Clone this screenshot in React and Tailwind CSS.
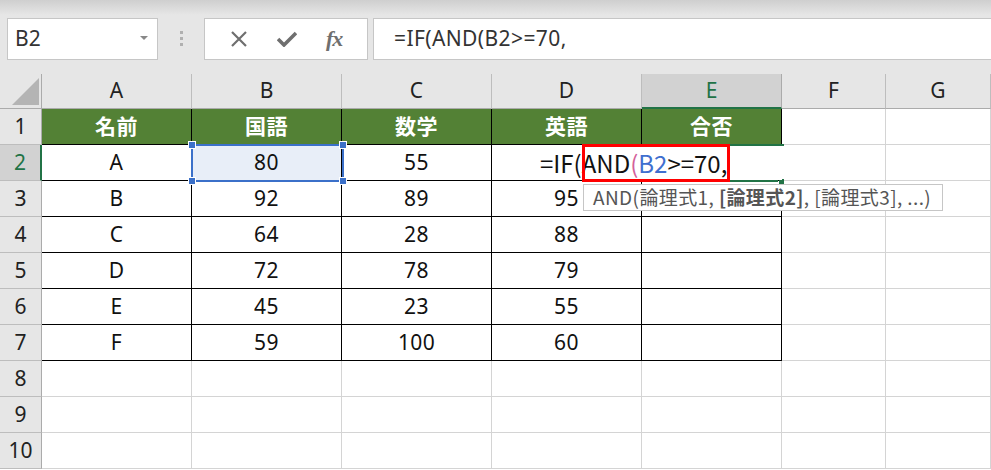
import React from "react";

const letters = ["A", "B", "C", "D", "E", "F", "G"];

const rows = [
  ["名前", "国語", "数学", "英語", "合否"],
  ["A", "80", "55", "", ""],
  ["B", "92", "89", "95", ""],
  ["C", "64", "28", "88", ""],
  ["D", "72", "78", "79", ""],
  ["E", "45", "23", "55", ""],
  ["F", "59", "100", "60", ""],
  [],
  [],
  [],
];

const FormulaBar = () => {
  return (
    <div className="h-[74px] bg-[#e6e6e6] relative">
      <div className="h-[15px] bg-gradient-to-b from-[#cfcfcf] to-[#e6e6e6]" />
      <div className="flex items-center h-[43px] mt-[2px]">
        <div className="ml-[7px] w-[151px] h-[42px] bg-white border border-[#c6c6c6] flex items-center justify-between pl-[7px] pr-[9px]">
          <span className="text-[21px] text-[#333]">B2</span>
          <svg width="8" height="5" viewBox="0 0 8 5">
            <path d="M0 0 L8 0 L4 4 Z" fill="#888" />
          </svg>
        </div>
        <div className="w-[46px] flex flex-col items-center gap-[3px]">
          <span className="w-[3px] h-[3px] bg-[#b0b0b0]" />
          <span className="w-[3px] h-[3px] bg-[#b0b0b0]" />
          <span className="w-[3px] h-[3px] bg-[#b0b0b0]" />
        </div>
        <div className="w-[164px] h-[42px] bg-white border border-[#c6c6c6] flex items-center justify-around px-[10px]">
          <svg width="18" height="18" viewBox="0 0 18 18">
            <path d="M2 2 L16 16 M16 2 L2 16" stroke="#6f6f6f" strokeWidth="2.2" />
          </svg>
          <svg width="20" height="16" viewBox="0 0 20 16">
            <path d="M1 8 L7 14 L19 2" stroke="#6f6f6f" strokeWidth="3.6" fill="none" />
          </svg>
          <span className="font-['Liberation_Serif',serif] italic font-bold text-[22px] text-[#6f6f6f] tracking-[-1px]">
            fx
          </span>
        </div>
        <div className="ml-[5px] flex-1 h-[42px] bg-white border-y border-l border-[#c6c6c6] flex items-center pl-[20px]">
          <span className="text-[21px] text-[#333] tracking-[0.4px]">=IF(AND(B2&gt;=70,</span>
        </div>
      </div>
    </div>
  );
};

const cellClass = (r, c) => {
  if (r === 0 && c <= 4) {
    return "bg-[#538135] text-white font-bold border-r border-b border-black";
  }
  if (r <= 6 && c <= 4) {
    if (r === 1 && c === 1) return "bg-[#e8eef8] border-r border-b border-black";
    return "bg-white border-r border-b border-black";
  }
  return "bg-white border-r border-b border-[#d4d4d4]";
};

const Sheet = () => {
  return (
    <div className="relative grid grid-cols-[42px_150px_150px_150px_150px_140px_104px_105px] grid-rows-[35px_repeat(10,36px)]">
      <div className="bg-[#e6e6e6] border-r border-b border-[#ababab] relative">
        <svg className="absolute left-[12px] top-[4px]" width="27" height="27" viewBox="0 0 27 27">
          <path d="M27 0 L27 27 L0 27 Z" fill="#b4b4b4" />
        </svg>
      </div>
      {letters.map((l) => (
        <div
          key={l}
          className={
            l === "E"
              ? "bg-[#d2d2d2] border-r border-[#ababab] border-b-2 border-b-[#217346] text-[#217346] flex items-center justify-center text-[21px]"
              : "bg-[#e6e6e6] border-r border-b border-[#bdbdbd] border-b-[#ababab] text-[#222] flex items-center justify-center text-[21px]"
          }
        >
          {l}
        </div>
      ))}
      {rows.map((row, r) => (
        <React.Fragment key={r}>
          <div
            className={
              r === 1
                ? "bg-[#d2d2d2] border-r-2 border-r-[#217346] border-b border-[#bdbdbd] text-[#217346] flex items-center justify-center text-[21px]"
                : "bg-[#e6e6e6] border-r border-b border-[#bdbdbd] border-r-[#ababab] text-[#222] flex items-center justify-center text-[21px]"
            }
          >
            {r + 1}
          </div>
          {letters.map((l, c) => (
            <div
              key={l}
              className={cellClass(r, c) + " flex items-center justify-center text-[21px] text-[#111] tracking-[0.4px]"}
            >
              {r === 0 ? <span className="text-white">{row[c]}</span> : row[c] || ""}
            </div>
          ))}
        </React.Fragment>
      ))}

      {/* selected cell B2 */}
      <div className="absolute left-[191px] top-[70px] w-[153px] h-[38px] border-2 border-[#3b70c9] pointer-events-none">
        <span className="absolute -left-[5px] -top-[5px] w-[8px] h-[8px] bg-[#3b70c9] border border-white" />
        <span className="absolute -right-[5px] -top-[5px] w-[8px] h-[8px] bg-[#3b70c9] border border-white" />
        <span className="absolute -left-[5px] -bottom-[5px] w-[8px] h-[8px] bg-[#3b70c9] border border-white" />
        <span className="absolute -right-[5px] -bottom-[5px] w-[8px] h-[8px] bg-[#3b70c9] border border-white" />
      </div>

      {/* editing cell E2 */}
      <div className="absolute left-[642px] top-[70px] w-[142px] h-[2px] bg-[#217346]" />
      <div className="absolute left-[642px] top-[106px] w-[136px] h-[2px] bg-[#217346]" />
      <div className="absolute left-[779px] top-[105px] w-[5px] h-[5px] bg-[#217346]" />
      <div className="absolute left-[493px] top-[72px] w-[289px] h-[34px] bg-white flex items-center pl-[47px] text-[24px] text-[#111] whitespace-nowrap font-['Noto_Sans_CJK_JP',sans-serif]">
        <span>=IF(</span>
        <span>AND</span>
        <span className="text-[#d4609a]">(</span>
        <span className="text-[#3f6fcf]">B2</span>
        <span>&gt;=70,</span>
      </div>
      <div className="absolute left-[582px] top-[70px] w-[148px] h-[38px] border-[3px] border-[#ff0000]" />

      {/* tooltip */}
      <div className="absolute left-[583px] top-[110px] w-[360px] h-[27px] bg-white border border-[#c6c6c6] flex items-center pl-[9px] text-[19px] text-[#555] whitespace-nowrap tracking-[0.4px] font-['Noto_Sans_CJK_JP',sans-serif]">
        AND(論理式1,&nbsp;<span className="font-bold">[論理式2]</span>, [論理式3], ...)
      </div>
    </div>
  );
};

export default function App() {
  return (
    <div className="w-[991px] h-[470px] overflow-hidden bg-white font-['Noto_Sans','Noto_Sans_CJK_JP',sans-serif]">
      <FormulaBar />
      <Sheet />
    </div>
  );
}
